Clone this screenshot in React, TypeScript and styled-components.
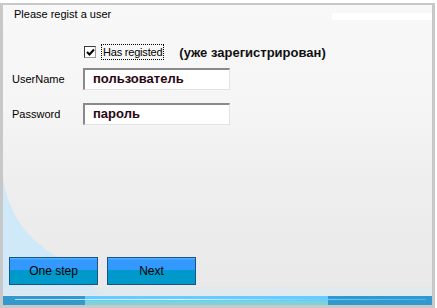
import React from "react";
import styled, { createGlobalStyle } from "styled-components";

const Global = createGlobalStyle`
  html, body { margin: 0; padding: 0; background: #ffffff; }
  body { font-family: "Liberation Sans", Arial, sans-serif; }
  * { box-sizing: border-box; }
`;

const Frame = styled.div`
  position: relative;
  margin-top: 3px;
  width: 435px;
  height: 305px;
  border-style: solid;
  border-color: #c8c8c8;
  border-width: 2px 3px 3px 3px;
  background: linear-gradient(180deg, #f8f8f8 0%, #f5f5f5 35%, #eeeeee 60%, #e8e8e8 100%);
  overflow: hidden;
`;

const Swoosh = styled.svg`
  position: absolute;
  left: 0;
  bottom: 0;
  width: 429px;
  height: 300px;
  pointer-events: none;
`;

const Glint = styled.div`
  position: absolute;
  top: 8px;
  right: 0;
  width: 100px;
  height: 7px;
  background: #ffffff;
`;

const Content = styled.div`
  position: relative;
  height: 100%;
  display: flex;
  flex-direction: column;
  padding: 3px 0 0 0;
`;

const Title = styled.div`
  font-size: 11px;
  line-height: 13px;
  color: #000;
  padding-left: 11px;
`;

const CheckRow = styled.div`
  display: flex;
  align-items: center;
  height: 16px;
  margin-top: 23px;
  padding-left: 81px;
`;

const Box = styled.span`
  display: inline-flex;
  align-items: center;
  justify-content: center;
  width: 12px;
  height: 12px;
  border: 1px solid #3a3a3a;
  border-right-color: #9a9a9a;
  border-bottom-color: #9a9a9a;
  background: #ffffff;
`;

const CheckLabel = styled.span`
  margin-left: 5px;
  height: 16px;
  padding: 0 1px;
  border: 1px dotted #000;
  font-size: 11px;
  letter-spacing: -0.2px;
  line-height: 14px;
  color: #000;
`;

const Note = styled.span`
  margin-left: 15px;
  font-size: 13px;
  font-weight: bold;
  color: #111;
`;

const FieldRow = styled.div<{ $gap: number }>`
  display: flex;
  align-items: center;
  margin-top: ${(p) => p.$gap}px;
  padding-left: 9px;
`;

const Label = styled.span`
  width: 71px;
  font-size: 11px;
  color: #000;
`;

const Input = styled.div`
  width: 147px;
  height: 22px;
  border-style: solid;
  border-width: 2px 1px 1px 2px;
  border-color: #8a8a8a #e2e2e2 #e2e2e2 #8a8a8a;
  background: #ffffff;
  padding-left: 8px;
  font-size: 13px;
  font-weight: bold;
  line-height: 18px;
  color: #2a0612;
`;

const Spacer = styled.div`
  flex: 1;
`;

const ButtonRow = styled.div`
  display: flex;
  gap: 9px;
  padding-left: 6px;
`;

const Button = styled.div`
  width: 89px;
  height: 28px;
  border: 1px solid #1b5482;
  background: linear-gradient(180deg, #55bbff 0, #3399ff 2px, #3399ff 46%, #0099cc 46%, #0099cc 100%);
  display: flex;
  align-items: center;
  justify-content: center;
  font-size: 12px;
  color: #000;
`;

const BottomBar = styled.div`
  position: relative;
  margin-top: 11px;
  height: 9px;
  background: #3399cc;
  display: flex;
`;

const BarLight = styled.div`
  margin-left: 82px;
  width: 243px;
  height: 100%;
  background: linear-gradient(180deg, #66ccff 0%, #66ccff 55%, #7fd3d8 55%, #7fd3d8 100%);
`;

const BarLine = styled.div`
  position: absolute;
  left: 12px;
  right: 6px;
  top: 3px;
  height: 1px;
  background: linear-gradient(90deg, rgba(180,230,255,0.9), rgba(255,255,255,0.8) 40%, rgba(120,210,255,0.9) 70%, rgba(60,190,255,0.9));
`;

const Check = () => (
  <svg width="9" height="9" viewBox="0 0 9 9">
    <path d="M1 4 L3.5 6.5 L8 1.5" stroke="#000" strokeWidth="2" fill="none" />
  </svg>
);

export default function App() {
  return (
    <>
      <Global />
      <Frame>
        <Swoosh viewBox="0 0 429 300" preserveAspectRatio="none">
          <path d="M0 172 C4 205 22 236 62 256 C76 264 88 276 96 290 L0 290 Z" fill="#cfe9f9" />
          <path d="M0 282 L429 282 L429 290 L0 290 Z" fill="#dbe9f1" opacity="0.6" />
        </Swoosh>
        <Glint />
        <Content>
          <Title>Please regist a user</Title>
          <CheckRow>
            <Box>
              <Check />
            </Box>
            <CheckLabel>Has registed</CheckLabel>
            <Note>(уже зарегистрирован)</Note>
          </CheckRow>
          <FieldRow $gap={8}>
            <Label>UserName</Label>
            <Input>пользователь</Input>
          </FieldRow>
          <FieldRow $gap={13}>
            <Label>Password</Label>
            <Input>пароль</Input>
          </FieldRow>
          <Spacer />
          <ButtonRow>
            <Button>One step</Button>
            <Button>Next</Button>
          </ButtonRow>
          <BottomBar>
            <BarLight />
            <BarLine />
          </BottomBar>
        </Content>
      </Frame>
    </>
  );
}
